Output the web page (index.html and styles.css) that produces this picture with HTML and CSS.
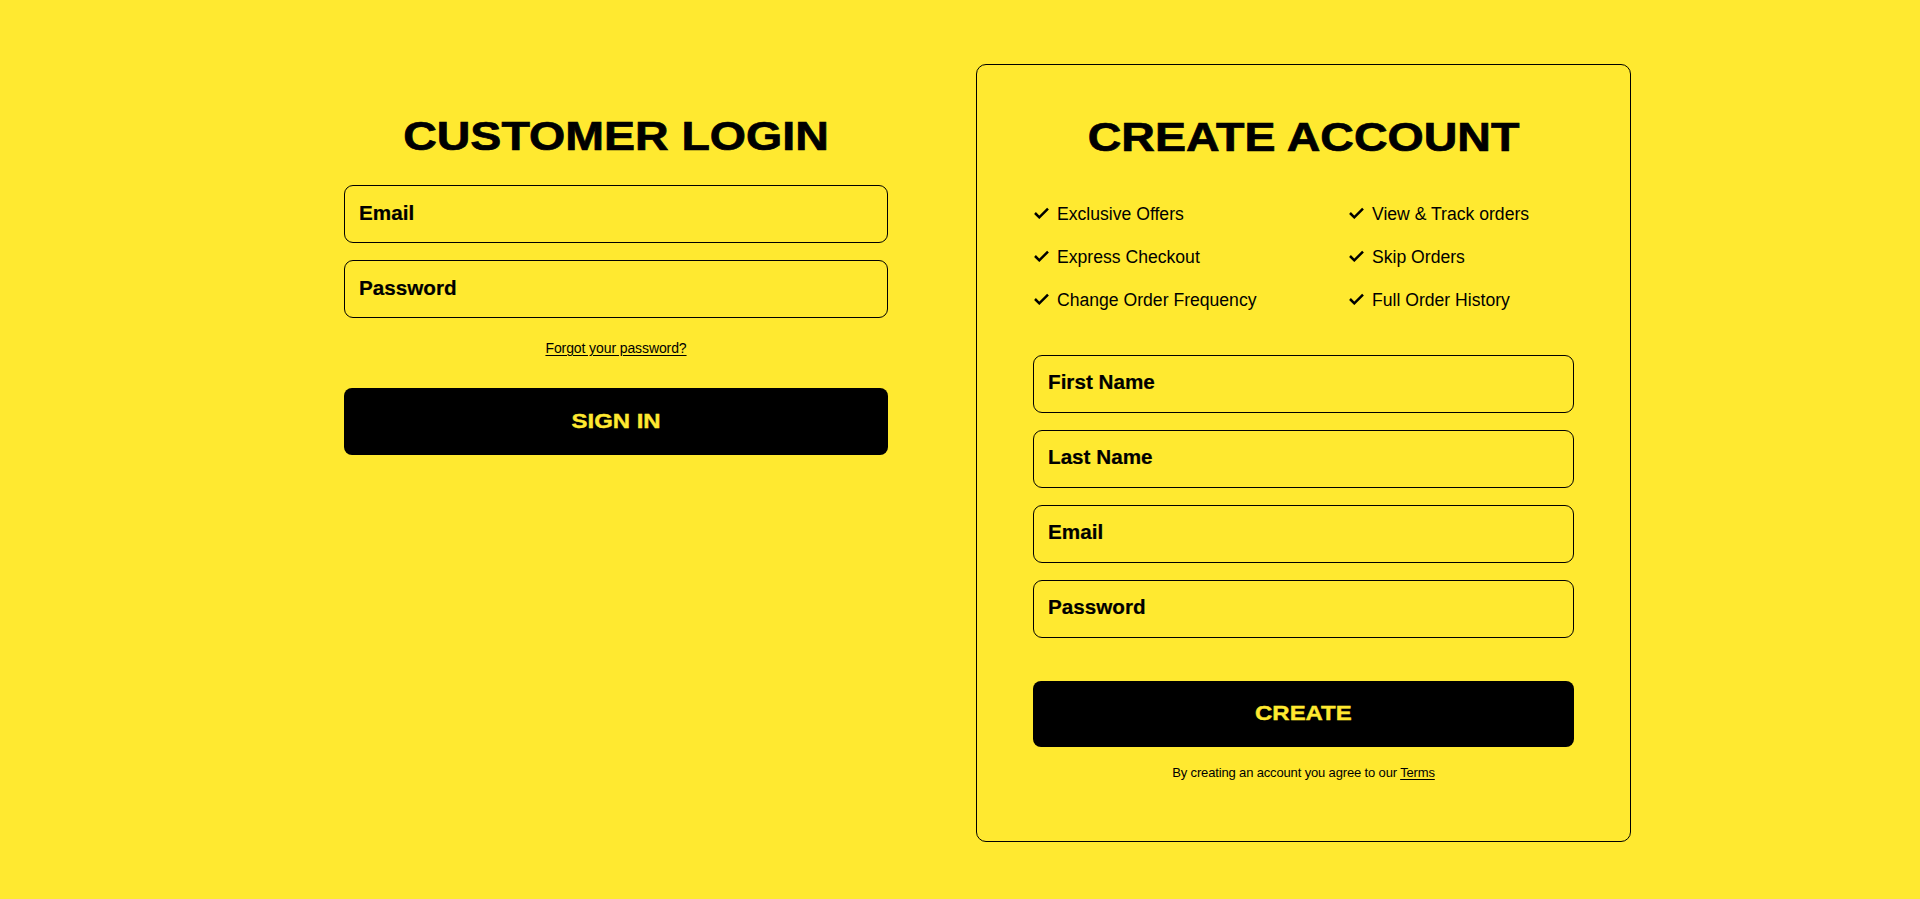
FILE: index.html
```html
<!DOCTYPE html>
<html lang="en">
<head>
<meta charset="utf-8">
<title>Customer Login</title>
<link rel="stylesheet" href="styles.css">
</head>
<body>
<main class="page">
  <section class="login">
    <h1 class="title"><span>CUSTOMER LOGIN</span></h1>
    <div class="fields">
      <label class="field"><span class="field-label">Email</span></label>
      <label class="field"><span class="field-label">Password</span></label>
    </div>
    <p class="forgot"><a href="#">Forgot your password?</a></p>
    <button type="button" class="btn"><span>SIGN IN</span></button>
  </section>

  <section class="signup">
    <h2 class="title"><span>CREATE ACCOUNT</span></h2>
    <ul class="benefits">
      <li><svg class="check" viewBox="0 0 15 12" width="15" height="12"><path d="M1 6 L5.3 10.3 L14 1.6" /></svg>Exclusive Offers</li>
      <li><svg class="check" viewBox="0 0 15 12" width="15" height="12"><path d="M1 6 L5.3 10.3 L14 1.6" /></svg>View &amp; Track orders</li>
      <li><svg class="check" viewBox="0 0 15 12" width="15" height="12"><path d="M1 6 L5.3 10.3 L14 1.6" /></svg>Express Checkout</li>
      <li><svg class="check" viewBox="0 0 15 12" width="15" height="12"><path d="M1 6 L5.3 10.3 L14 1.6" /></svg>Skip Orders</li>
      <li><svg class="check" viewBox="0 0 15 12" width="15" height="12"><path d="M1 6 L5.3 10.3 L14 1.6" /></svg>Change Order Frequency</li>
      <li><svg class="check" viewBox="0 0 15 12" width="15" height="12"><path d="M1 6 L5.3 10.3 L14 1.6" /></svg>Full Order History</li>
    </ul>
    <div class="fields">
      <label class="field"><span class="field-label">First Name</span></label>
      <label class="field"><span class="field-label">Last Name</span></label>
      <label class="field"><span class="field-label">Email</span></label>
      <label class="field"><span class="field-label">Password</span></label>
    </div>
    <button type="button" class="btn"><span>CREATE</span></button>
    <p class="terms">By creating an account you agree to our <a href="#">Terms</a></p>
  </section>
</main>
</body>
</html>
```

FILE: styles.css
```css
html, body {
  margin: 0;
  padding: 0;
}

body {
  background: #ffe930;
  color: #000;
  font-family: "Liberation Sans", Arial, sans-serif;
  min-height: 899px;
}

.page {
  display: flex;
  align-items: flex-start;
  gap: 88px;
  padding: 64px 0 0 344px;
}

.login {
  width: 544px;
  padding-top: 50px;
  display: flex;
  flex-direction: column;
}

.title {
  margin: 0;
  padding-top: 2px;
  height: 40px;
  font-family: "Liberation Sans", Arial, sans-serif;
  font-weight: 700;
  font-size: 40px;
  line-height: 40px;
  text-align: center;
  white-space: nowrap;
  -webkit-text-stroke: 0.7px #000;
}

.title span {
  display: inline-block;
  transform: scaleX(1.163);
  transform-origin: center center;
}

.fields {
  display: flex;
  flex-direction: column;
  gap: 17px;
}

.login .fields {
  margin-top: 29px;
}

.field {
  height: 58px;
  box-sizing: border-box;
  border: 1px solid #000;
  border-radius: 9px;
  display: flex;
  align-items: center;
  padding: 0 14px 3px;
}

.field-label {
  display: inline-block;
  font-weight: 700;
  font-size: 19.5px;
  line-height: 22px;
  transform: scaleX(1.06);
  transform-origin: left center;
  white-space: nowrap;
  -webkit-text-stroke: 0.2px #000;
}

.forgot {
  margin: 20px 0 0;
  text-align: center;
  font-size: 14px;
  line-height: 20px;
  letter-spacing: -0.1px;
}

.forgot a,
.terms a {
  color: #000;
  text-decoration: underline;
  text-underline-offset: 2px;
}

.btn {
  display: flex;
  align-items: center;
  justify-content: center;
  width: 100%;
  height: 67px;
  margin: 30px 0 0;
  padding: 0 0 2px;
  border: none;
  border-radius: 8px;
  background: #000;
  color: #ffe930;
  font-family: "Liberation Sans", Arial, sans-serif;
  font-weight: 700;
  font-size: 21px;
  line-height: 24px;
  cursor: pointer;
  -webkit-text-stroke: 0.4px #ffe930;
}

.btn span {
  display: inline-block;
  transform: scaleX(1.14);
}

.signup {
  width: 655px;
  box-sizing: border-box;
  border: 1px solid #000;
  border-radius: 10px;
  padding: 50px 56px 58px;
}

.benefits {
  list-style: none;
  margin: 35.5px 0 0;
  padding: 0;
  display: grid;
  grid-template-columns: 315px 1fr;
  grid-auto-rows: 43px;
}

.benefits li {
  display: flex;
  align-items: center;
  gap: 8px;
  font-size: 17.6px;
  line-height: 20px;
  white-space: nowrap;
}

.check {
  flex: none;
  margin-left: 1px;
  margin-top: -3px;
  fill: none;
  stroke: #000;
  stroke-width: 2.5;
  stroke-linecap: butt;
  stroke-linejoin: miter;
}

.signup .fields {
  margin-top: 33px;
}

.signup .btn {
  margin-top: 43px;
  height: 66px;
}

.terms {
  margin: 16px 0 0;
  text-align: center;
  font-size: 13px;
  line-height: 20px;
  letter-spacing: -0.15px;
}
```
